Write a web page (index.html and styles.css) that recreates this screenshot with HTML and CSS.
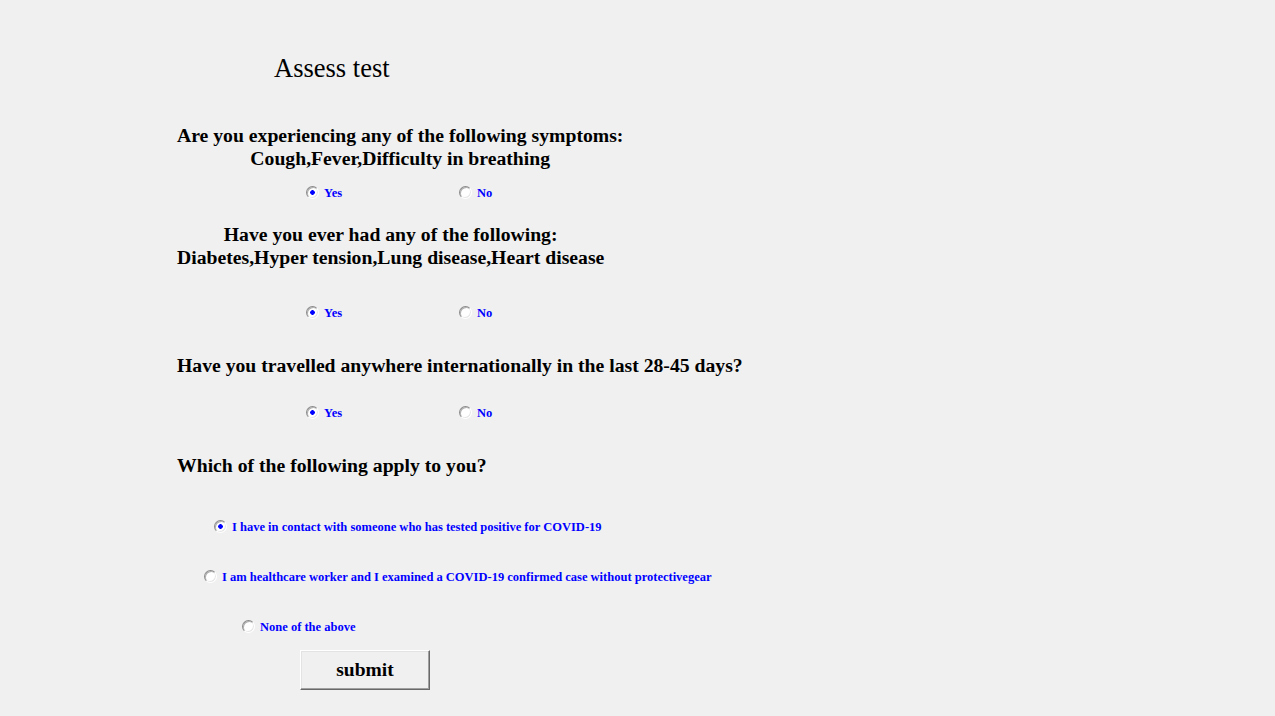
FILE: index.html
```html
<!DOCTYPE html>
<html>
<head>
<meta charset="utf-8">
<title>Assess test</title>
<link rel="stylesheet" href="styles.css">
</head>
<body>
<form class="form">
  <h1 class="title">Assess test</h1>

  <p class="question q1">Are you experiencing any of the following symptoms:<br>Cough,Fever,Difficulty in breathing</p>
  <div class="choice-row row1">
    <label class="choice"><input type="radio" name="q1" checked><span>Yes</span></label>
    <label class="choice"><input type="radio" name="q1"><span>No</span></label>
  </div>

  <p class="question q2">Have you ever had any of the following:<br>Diabetes,Hyper tension,Lung disease,Heart disease</p>
  <div class="choice-row row2">
    <label class="choice"><input type="radio" name="q2" checked><span>Yes</span></label>
    <label class="choice"><input type="radio" name="q2"><span>No</span></label>
  </div>

  <p class="question q3">Have you travelled anywhere internationally in the last 28-45 days?</p>
  <div class="choice-row row3">
    <label class="choice"><input type="radio" name="q3" checked><span>Yes</span></label>
    <label class="choice"><input type="radio" name="q3"><span>No</span></label>
  </div>

  <p class="question q4">Which of the following apply to you?</p>
  <label class="option opt1"><input type="radio" name="q4" checked><span>I have in contact with someone who has tested positive for COVID-19</span></label>
  <label class="option opt2"><input type="radio" name="q4"><span>I am healthcare worker and I examined a COVID-19 confirmed case without protectivegear</span></label>
  <label class="option opt3"><input type="radio" name="q4"><span>None of the above</span></label>

  <button type="button" class="submit">submit</button>
</form>
</body>
</html>
```

FILE: styles.css
```css
html, body {
  margin: 0;
  padding: 0;
  background: #f0f0f0;
}

body {
  font-family: "Liberation Serif", "Times New Roman", serif;
  color: #000;
}

.form {
  display: flex;
  flex-direction: column;
  align-items: flex-start;
  padding: 53px 0 0 177px;
}

.title {
  margin: 0 0 0 97px;
  font-size: 26.5px;
  font-weight: normal;
  line-height: 30px;
  height: 30px;
}

.question {
  margin: 0;
  font-size: 19.7px;
  font-weight: bold;
  line-height: 23px;
  text-align: center;
  width: fit-content;
}

.q1 { margin-top: 41px; }
.q2 { margin-top: 23px; }
.q3 { margin-top: 34px; }
.q4 { margin-top: 34px; }

.choice-row {
  display: flex;
  height: 16px;
  align-items: center;
  padding-left: 129px;
}

.row1 { margin-top: 14px; }
.row2 { margin-top: 35px; }
.row3 { margin-top: 27px; }

.choice {
  display: flex;
  align-items: center;
  width: 153px;
}

.choice span,
.option span {
  font-size: 12.5px;
  font-weight: bold;
  color: #0000ff;
  line-height: 16px;
  margin-left: 5px;
  margin-top: 2px;
}

.option {
  display: flex;
  align-items: center;
  height: 16px;
}

.opt1 { margin: 41px 0 0 37px; }
.opt2 { margin: 34px 0 0 27px; }
.opt3 { margin: 34px 0 0 65px; }

input[type="radio"] {
  -webkit-appearance: none;
  appearance: none;
  margin: 0;
  width: 13px;
  height: 13px;
  box-sizing: border-box;
  border-radius: 50%;
  border: 1px solid;
  border-color: #8a8a8a #ffffff #ffffff #8a8a8a;
  background: #ffffff;
  box-shadow: inset 1px 1px 0 #b0b0b0, inset -1px -1px 0 #e6e6e6;
  flex: none;
}

input[type="radio"]:checked {
  background: radial-gradient(circle at 50% 50%, #0000ff 0, #0000ff 2px, #ffffff 2.6px);
}

.submit {
  margin: 16px 0 0 123px;
  width: 130px;
  height: 40px;
  box-sizing: border-box;
  background: #f0f0f0;
  border: 1px solid;
  border-color: #ffffff #696969 #696969 #ffffff;
  box-shadow: inset -1px -1px 0 #a0a0a0, inset 1px 1px 0 #e3e3e3;
  font-family: "Liberation Serif", "Times New Roman", serif;
  font-size: 19.5px;
  font-weight: bold;
  color: #000;
  padding: 0;
}
```
